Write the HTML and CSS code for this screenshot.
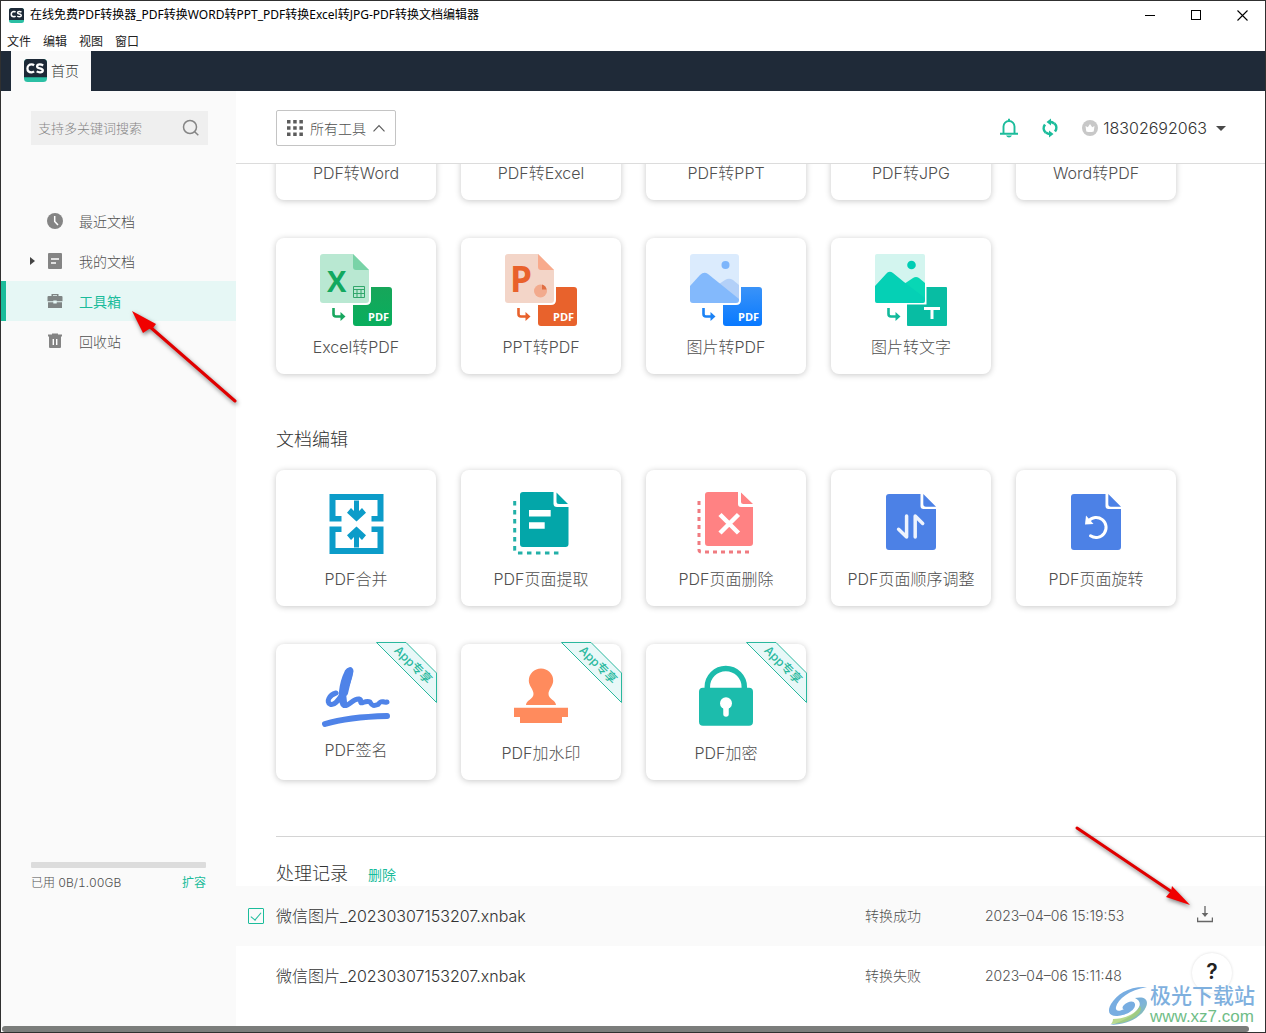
FILE: index.html
```html
<!DOCTYPE html>
<html lang="zh-CN">
<head>
<meta charset="utf-8">
<meta name="viewport" content="width=device-width, initial-scale=1">
<title>在线免费PDF转换器</title>
<link rel="stylesheet" href="styles.css">
</head>
<body>
<div class="window">
  <header class="titlebar">
    <svg class="logo logo-small" viewBox="0 0 24 24" aria-hidden="true"><rect width="24" height="24" rx="4" fill="#2bbfa4"/><path d="M4 0h16a4 4 0 0 1 4 4v15H0V4a4 4 0 0 1 4-4z" fill="#1d2937"/><path d="M10.500 6.600Q9.500 5.700 8 5.700C5.300 5.700 3.600 7.400 3.600 9.800s1.700 4.100 4.400 4.100q1.500 0 2.500-.9M20 6.700q-1.500-1-3.600-1-2.700 0-2.700 2 0 1.500 2.900 2 3 .5 3 2.200 0 2-2.900 2-2 0-3.500-1" fill="none" stroke="#fff" stroke-width="2.400"/></svg>
    <h1 class="window-title">在线免费PDF转换器_PDF转换WORD转PPT_PDF转换Excel转JPG-PDF转换文档编辑器</h1>
    <div class="window-controls">
      <button class="win-button" aria-label="最小化"><svg width="11" height="11" viewBox="0 0 11 11"><path d="M0 5.500h10" stroke="#000" fill="none"/></svg></button>
      <button class="win-button" aria-label="最大化"><svg width="11" height="11" viewBox="0 0 11 11"><rect x=".5" y=".5" width="9" height="9" stroke="#000" fill="none"/></svg></button>
      <button class="win-button" aria-label="关闭"><svg width="11" height="11" viewBox="0 0 11 11"><path d="M.5.500l10 10M10.500.500l-10 10" stroke="#000" stroke-width="1.100" fill="none"/></svg></button>
    </div>
  </header>
  <nav class="menubar">
    <a href="#">文件</a><a href="#">编辑</a><a href="#">视图</a><a href="#">窗口</a>
  </nav>
  <div class="tabbar">
    <a class="tab" href="#">
      <svg class="logo" viewBox="0 0 24 24" aria-hidden="true"><rect width="24" height="24" rx="4" fill="#2bbfa4"/><path d="M4 0h16a4 4 0 0 1 4 4v15H0V4a4 4 0 0 1 4-4z" fill="#1d2937"/><path d="M10.500 6.600Q9.500 5.700 8 5.700C5.300 5.700 3.600 7.400 3.600 9.800s1.700 4.100 4.400 4.100q1.500 0 2.500-.9M20 6.700q-1.500-1-3.600-1-2.700 0-2.700 2 0 1.500 2.900 2 3 .5 3 2.200 0 2-2.900 2-2 0-3.500-1" fill="none" stroke="#fff" stroke-width="2.400"/></svg>
      首页</a>
  </div>

  <div class="body">
    <aside class="sidebar">
      <form class="search">
        <input type="text" placeholder="支持多关键词搜索" aria-label="支持多关键词搜索">
        <svg width="18" height="18" viewBox="0 0 18 18" aria-hidden="true"><circle cx="8" cy="8" r="6.500" fill="none" stroke="#858585" stroke-width="1.500"/><path d="M12.700 12.700l3.600 3.600" stroke="#858585" stroke-width="1.500"/></svg>
      </form>
      <nav class="side-nav">
        <a class="side-link" href="#"><span class="caret-slot"></span>
          <svg width="16" height="16" viewBox="0 0 16 16"><circle cx="8" cy="8" r="8" fill="#848484"/><path d="M7.700 3v5.500l3.300 3.600" fill="none" stroke="#fff" stroke-width="1.500"/></svg>
          最近文档</a>
        <a class="side-link" href="#"><span class="caret-slot"><svg width="5" height="8" viewBox="0 0 5 8"><path d="M0 0l5 4-5 4z" fill="#444"/></svg></span>
          <svg width="16" height="16" viewBox="0 0 16 16"><rect x="1" width="14" height="16" rx="1" fill="#848484"/><path d="M4 6h8M4 10h5" stroke="#fff" stroke-width="1.600"/></svg>
          我的文档</a>
        <a class="side-link active" href="#"><span class="caret-slot"></span>
          <svg width="16" height="16" viewBox="0 0 16 16"><path fill-rule="evenodd" d="M4.500 3V1h7v2H14.500q1 0 1 1v4.300H9.700V7.500H6.300v.8H.5V4q0-1 1-1zM6 3h4v-.8H6zM1 9.200h5.300v1.300h3.400V9.200H15V15H1z" fill="#7f8584"/></svg>
          工具箱</a>
        <a class="side-link" href="#"><span class="caret-slot"></span>
          <svg width="16" height="16" viewBox="0 0 16 16"><path d="M1 1.500h4V.5h6v1h4v2H1zM2 3.500h12V14q0 1-1 1H3q-1 0-1-1z" fill="#848484"/><path d="M6.300 6v6M9.700 6v6" stroke="#fff" stroke-width="1.400"/></svg>
          回收站</a>
      </nav>
      <div class="storage">
        <div class="storage-bar"></div>
        <div class="storage-info"><span>已用 0B/1.00GB</span><a href="#">扩容</a></div>
      </div>
    </aside>

    <main class="main">
      <div class="toolbar">
        <button class="filter">
          <svg width="16" height="16" viewBox="0 0 16 16"><g fill="#5c5c5c"><path d="M0 0h3.500v3.500H0zM6.200 0h3.500v3.500H6.200zM12.400 0h3.500v3.500h-3.500zM0 6.200h3.500v3.500H0zM6.200 6.200h3.500v3.500H6.200zM12.400 6.200h3.500v3.500h-3.500zM0 12.400h3.500v3.500H0zM6.200 12.400h3.500v3.500H6.200zM12.400 12.400h3.500v3.500h-3.500z"/></g></svg>
          <span>所有工具</span>
          <svg width="12" height="8" viewBox="0 0 12 8"><path d="M.5 7.300L6 1.500l5.500 5.800" fill="none" stroke="#5c5c5c" stroke-width="1.200"/></svg>
        </button>
        <div class="account">
          <button class="icon-button" aria-label="通知"><svg width="18" height="20" viewBox="0 0 18 20"><path d="M3.500 15.500V8.500a5.500 5.500 0 0 1 11 0v7M0 15.700h18M9 3V.8" fill="none" stroke="#1bbc9b" stroke-width="1.900"/><path d="M6 17.500h6q-1 2-3 2t-3-2z" fill="#1bbc9b"/></svg></button>
          <button class="icon-button" aria-label="同步"><svg width="16" height="20" viewBox="0 0 16 20"><path d="M3.600 14.600A6 6 0 0 1 3 6.500M12.400 5.400A6 6 0 0 1 13 13.500M7.500 3.900q2.800 0 4.600 1.500M8.500 16.100q-2.800 0-4.600-1.500" fill="none" stroke="#1bbc9b" stroke-width="2.600"/><path d="M9 .500v7L4.500 4zM7 19.500v-7l4.500 3.500z" fill="#1bbc9b"/></svg></button>
          <button class="user">
            <svg width="16" height="16" viewBox="0 0 16 16"><circle cx="8" cy="8" r="8" fill="#c8c8c8"/><path d="M3.500 6l2.300 1.200L8 4l2.200 3.200L12.500 6l-.8 5.500q-3.700 1-7.400 0z" fill="#fff"/></svg>
            <span>18302692063</span>
            <svg width="10" height="5" viewBox="0 0 10 5"><path d="M0 0h10L5 5z" fill="#4a4a4a"/></svg>
          </button>
        </div>
      </div>

      <div class="content">
        <section class="convert">
          <div class="tools">
            <a class="tool" href="#"><span class="tool-icon"></span>PDF转Word</a>
            <a class="tool" href="#"><span class="tool-icon"></span>PDF转Excel</a>
            <a class="tool" href="#"><span class="tool-icon"></span>PDF转PPT</a>
            <a class="tool" href="#"><span class="tool-icon"></span>PDF转JPG</a>
            <a class="tool" href="#"><span class="tool-icon"></span>Word转PDF</a>

            <a class="tool" href="#">
              <svg class="tool-icon" viewBox="0 0 72 72"><defs><linearGradient id="green" x2="0" y2="1"><stop stop-color="#17a65a"/><stop offset="1" stop-color="#08ae5d"/></linearGradient></defs><path d="M51 33h18q3 0 3 3v33q0 3-3 3H36q-3 0-3-3V51h13q5 0 5-5z" fill="url(#green)"/><path d="M3 0h30l16 16v30q0 3-3 3H3q-3 0-3-3V3q0-3 3-3z" fill="#b9e8d2"/><path d="M33 0l16 16H36q-3 0-3-3z" fill="#79d3a7"/><text x="7" y="38" class="glyph-x" fill="#12a85f">X</text><path d="M33.500 32.500h11v11h-11zM33.500 35.500h11M33.500 39.500h11M37 35.500v8M41 35.500v8" fill="none" stroke="#31a66b" stroke-width="1"/><path d="M13.500 54v6q0 2.500 2.500 2.500h6" fill="none" stroke="#18a75f" stroke-width="2.600"/><path d="M20.500 58l5 4.500-5 4.500z" fill="#18a75f"/><text x="48" y="67" class="glyph-pdf">PDF</text></svg>
              Excel转PDF</a>
            <a class="tool" href="#">
              <svg class="tool-icon" viewBox="0 0 72 72"><path d="M51 33h18q3 0 3 3v33q0 3-3 3H36q-3 0-3-3V51h13q5 0 5-5z" fill="#e8622c"/><path d="M3 0h30l16 16v30q0 3-3 3H3q-3 0-3-3V3q0-3 3-3z" fill="#f3d5c8"/><path d="M33 0l16 16H36q-3 0-3-3z" fill="#f8aa8c"/><text x="5" y="38" class="glyph-p" fill="#e9612b">P</text><circle cx="35.500" cy="37" r="6.500" fill="#f2aa8d"/><path d="M37 35.500v-5a6 6 0 0 1 4.500 5z" fill="#e06e43"/><path d="M13.500 54v6q0 2.500 2.500 2.500h6" fill="none" stroke="#e8622c" stroke-width="2.600"/><path d="M20.500 58l5 4.500-5 4.500z" fill="#e8622c"/><text x="48" y="67" class="glyph-pdf">PDF</text></svg>
              PPT转PDF</a>
            <a class="tool" href="#">
              <svg class="tool-icon" viewBox="0 0 72 72"><defs><linearGradient id="blue" x2="0" y2="1"><stop stop-color="#3a93f8"/><stop offset="1" stop-color="#0879ff"/></linearGradient></defs><path d="M51 33h18q3 0 3 3v33q0 3-3 3H36q-3 0-3-3V51h13q5 0 5-5z" fill="url(#blue)"/><rect width="49" height="49" rx="3" fill="#dbebfd"/><path d="M29 30l6-4q4-2.500 8 0l6 5v15L29 30z" fill="#b3d0f8"/><path d="M0 32l10-11q4-4 8-1l31 25v1q0 3-3 3H3q-3 0-3-3z" fill="#83b9fc"/><circle cx="35.500" cy="11" r="4" fill="#7db5fb"/><path d="M13.500 54v6q0 2.500 2.500 2.500h6" fill="none" stroke="#1b82f5" stroke-width="2.600"/><path d="M20.500 58l5 4.500-5 4.500z" fill="#1b82f5"/><text x="48" y="67" class="glyph-pdf">PDF</text></svg>
              图片转PDF</a>
            <a class="tool" href="#">
              <svg class="tool-icon" viewBox="0 0 72 72"><path d="M51.500 33H71q1 0 1 1v37q0 1-1 1H33q-1 0-1-1V50.500h19.500z" fill="#08bda3"/><rect width="50" height="49" rx="2" fill="#d3f5ef"/><path d="M26 32l12-8q3-2 6 0l6 5v18z" fill="#08d7b5"/><path d="M0 32l11-12q3-4 7-1l11 9 21 16v3q0 2-2 2H2q-2 0-2-2z" fill="#05d0b5"/><circle cx="36.500" cy="11" r="4.300" fill="#00cdb4"/><path d="M13.500 54v6q0 2.500 2.500 2.500h6" fill="none" stroke="#12b99b" stroke-width="2.600"/><path d="M20.500 58l5 4.500-5 4.500z" fill="#12b99b"/><path d="M49 54.500h16M57 54.500V65" stroke="#fff" stroke-width="3" fill="none"/></svg>
              图片转文字</a>
          </div>
        </section>

        <section class="edit">
          <h2>文档编辑</h2>
          <div class="tools">
            <a class="tool" href="#">
              <svg class="tool-icon" viewBox="0 0 72 72"><g fill="#0c9cc9"><path d="M9.500 8h54v27.500h-12V30h6V14h-42v16h6v5.500h-12zM27 26.700l4-4.700 3 3V14.500h5V25l3-3 4 4.700-9.500 8.800z"/><path transform="matrix(1 0 0 -1 0 76)" d="M9.500 8h54v27.500h-12V30h6V14h-42v16h6v5.500h-12zM27 26.700l4-4.700 3 3V14.500h5V25l3-3 4 4.700-9.500 8.800z"/></g></svg>
              PDF合并</a>
            <a class="tool" href="#">
              <svg class="tool-icon" viewBox="0 0 72 72"><path d="M18 6h30.500v11.500q0 3.500 3.500 3.500h11.500v37q0 3-3 3H18q-3 0-3-3V9q0-3 3-3zM51.500 6.500L63 18H54q-2.500 0-2.500-2.500z" fill="#03a6a9"/><path d="M24 27.300h21.700M24 39.500h15.700" stroke="#fff" stroke-width="6.500"/><path d="M9.700 15v49q0 3 3 3H57" fill="none" stroke="#22b0a8" stroke-width="3" stroke-dasharray="4.500 4.500"/></svg>
              PDF页面提取</a>
            <a class="tool" href="#">
              <svg class="tool-icon" viewBox="0 0 72 72"><path d="M18 6h30v12q0 3 3 3h12v36q0 3-3 3H18q-3 0-3-3V9q0-3 3-3zM51 6.500L63 18h-9.500q-2.500 0-2.500-2.500z" fill="#ff8283"/><path d="M30 28.500l18.500 18.500M48.500 28.500L30 47" stroke="#fff" stroke-width="4.500"/><path d="M9 15v49q0 2 3 2h47.500" fill="none" stroke="#f07b80" stroke-width="3" stroke-dasharray="4 4"/></svg>
              PDF页面删除</a>
            <a class="tool" href="#">
              <svg class="tool-icon" viewBox="0 0 72 72"><path d="M14 8h31.500v12q0 3 3 3H61v38q0 3-3 3H14q-3 0-3-3V11q0-3 3-3zM48.300 8L61 20.700H51q-2.700 0-2.700-2.700z" fill="#4c81e6"/><path d="M31.600 30v21l-8-7.700M40.200 51V30l7.500 7.500" fill="none" stroke="#eef3fd" stroke-width="3.500" stroke-linecap="round" stroke-linejoin="round"/></svg>
              PDF页面顺序调整</a>
            <a class="tool" href="#">
              <svg class="tool-icon" viewBox="0 0 72 72"><path d="M14 8h31.500v12q0 3 3 3H61v38q0 3-3 3H14q-3 0-3-3V11q0-3 3-3zM48.300 8L61 20.700H51q-2.700 0-2.700-2.700z" fill="#4c81e6"/><path d="M28.500 35a10 10 0 1 1 2 14.800" fill="none" stroke="#fff" stroke-width="3" stroke-linecap="round"/><path d="M26 29.500l-1 9 8.500-.5z" fill="#fff"/></svg>
              PDF页面旋转</a>

            <a class="tool" href="#">
              <svg class="tool-icon tool-icon-short" viewBox="0 0 72 69"><g fill="none" stroke="#4f83e8" stroke-width="5" stroke-linecap="round" stroke-linejoin="round"><path d="M16 33C9 35 6 42 10 44C17 48 29 24 31 11C31 9 29 9 27 12C21 24 19 43 24 45.500C29 47 33 38 39 39C43 40 38 44 43 42.500C47 41 48 41 50 42C52 46 54 46 58 44.500C62 39 62 43 67 42"/><path d="M29 12C24 22 22 34 24 42M30 12L25 33" stroke-width="6"/><path d="M5 64Q28 57 67 56" stroke-width="6"/></g></svg>
              PDF签名
              <svg class="ribbon" viewBox="0 0 61 61"><path d="M.5.500H30L60.500 31v29.500z" fill="#e8f8f8" stroke="#2ab89e"/><text x="37" y="27" transform="rotate(45 37 23)">App专享</text></svg></a>
            <a class="tool" href="#">
              <svg class="tool-icon" viewBox="0 0 72 72"><path d="M36 8.500a12.200 12.200 0 0 1 12.200 12.200c0 5-4.700 8.500-4.700 13.300 0 5 7.500 6.500 7.500 11H21c0-4.500 7.500-6 7.500-11 0-4.800-4.700-8.300-4.700-13.300A12.200 12.200 0 0 1 36 8.500zM9 47.700h54V57h-6v6H15v-6H9z" fill="#ff8b5d"/></svg>
              PDF加水印
              <svg class="ribbon" viewBox="0 0 61 61"><path d="M.5.500H30L60.500 31v29.500z" fill="#e8f8f8" stroke="#2ab89e"/><text x="37" y="27" transform="rotate(45 37 23)">App专享</text></svg></a>
            <a class="tool" href="#">
              <svg class="tool-icon" viewBox="0 0 72 72"><path d="M17.300 29v-2a18.500 18.500 0 0 1 37 0v2" fill="none" stroke="#1cbcac" stroke-width="5.500"/><rect x="9" y="27.700" width="54" height="38" rx="4" fill="#1cbcac"/><circle cx="36" cy="43.300" r="6" fill="#fff"/><path d="M36 45v9" stroke="#fff" stroke-width="5.500" stroke-linecap="round"/></svg>
              PDF加密
              <svg class="ribbon" viewBox="0 0 61 61"><path d="M.5.500H30L60.500 31v29.500z" fill="#e8f8f8" stroke="#2ab89e"/><text x="37" y="27" transform="rotate(45 37 23)">App专享</text></svg></a>
          </div>
        </section>

        <section class="records">
          <div class="records-head"><h2>处理记录</h2><a href="#">删除</a></div>
          <table>
            <tbody>
              <tr class="selected">
                <td class="col-check"><input type="checkbox" id="rec1" aria-label="选择记录" checked></td>
                <td class="col-name"><label for="rec1">微信图片_20230307153207.xnbak</label></td>
                <td class="col-status">转换成功</td>
                <td class="col-date">2023–04–06 15:19:53</td>
                <td class="col-action"><button class="icon-button" aria-label="下载"><svg width="16" height="17" viewBox="0 0 16 17"><path d="M8 0v9M.6 11.500v4h14.800v-4" fill="none" stroke="#666" stroke-width="1.300"/><path d="M4.700 7h6.600L8 11z" fill="#666"/></svg></button></td>
              </tr>
              <tr>
                <td class="col-check"></td>
                <td class="col-name">微信图片_20230307153207.xnbak</td>
                <td class="col-status">转换失败</td>
                <td class="col-date">2023–04–06 15:11:48</td>
                <td class="col-action"></td>
              </tr>
            </tbody>
          </table>
        </section>
      </div>
    </main>
  </div>
  <div class="scroll-thumb"></div>

  <button class="help" aria-label="帮助">?</button>

  <div class="watermark">
    <svg width="42" height="40" viewBox="0 0 42 40" aria-hidden="true"><defs><linearGradient id="swirl" x2="1" y2="1"><stop stop-color="#5f9fdc"/><stop offset=".55" stop-color="#7fb4d8"/><stop offset="1" stop-color="#8cc98c"/></linearGradient></defs><path d="M40 1C22 0 10 8 4 18c-4 7-2 12 5 12 8 0 20-5 19-12-1-4-7-3-11 1-2 2-2 4 0 4-5 3-9 2-8-2C11 13 22 4 40 1z" fill="#609fdc" opacity=".85"/><path d="M28 12c10-2 14 2 11 9C35 31 20 39 3 39c14-4 26-11 29-18 2-4 0-7-4-9z" fill="url(#swirl)"/><path d="M6 33c12 0 24-6 27-13 5 7-11 18-29 18 1-1 2-3 2-5z" fill="#a5cf72" opacity=".8"/></svg>
    <div class="watermark-text"><strong>极光下载站</strong><span>www.xz7.com</span></div>
  </div>

  <svg class="pointer pointer-left" width="112" height="100" viewBox="0 0 112 100" aria-hidden="true"><path d="M20 19l86 75" stroke="#e00000" stroke-width="3" stroke-linecap="round"/><path d="M3 4l24 13-3 4-4 1-6 4z" fill="#f00000"/></svg>
  <svg class="pointer pointer-right" width="122" height="86" viewBox="0 0 122 86" aria-hidden="true"><path d="M3 3l95 64" stroke="#e00000" stroke-width="3" stroke-linecap="round"/><path d="M116 80L98 61l-1 5-5 6z" fill="#f00000"/></svg>
</div>
</body>
</html>
```

FILE: styles.css
```css
* { box-sizing: border-box; }

body {
  margin: 0;
  font-family: Inter, "Noto Sans CJK SC", sans-serif;
  font-size: 14px;
  font-weight: 300;
  color: #505050;
  background: #fff;
}

a { color: inherit; text-decoration: none; }
button { padding: 0; border: 0; background: none; font: inherit; color: inherit; cursor: pointer; }
svg { flex: none; }
h1, h2 { margin: 0; font-weight: 300; }

.window {
  position: relative;
  display: flex;
  flex-direction: column;
  min-height: 100vh;
  border: 1px solid #303030;
  overflow: hidden;
}

/* Window chrome */
.titlebar {
  display: flex;
  align-items: center;
  gap: 6px;
  height: 28px;
  padding-left: 8px;
}
.logo { width: 23px; height: 23px; }
.logo-small { width: 15px; height: 15px; }
.window-title {
  flex: 1;
  font: 400 12px/16px "Noto Sans", "Noto Sans CJK SC", sans-serif;
  color: #000;
  white-space: nowrap;
}
.window-controls { display: flex; align-self: stretch; }
.win-button { display: grid; place-items: center; width: 46px; }

.menubar {
  display: flex;
  gap: 12px;
  height: 22px;
  padding: 0 6px;
  font: 400 12px/24px "Noto Sans CJK SC", sans-serif;
  color: #222;
}

.tabbar { display: flex; height: 40px; padding-left: 10px; background: #1f2a38; }
.tab {
  display: flex;
  align-items: center;
  gap: 4px;
  width: 80px;
  padding: 0 0 2px 13px;
  background: #fafafa;
  color: #333;
}

.body { display: flex; flex: 1; }

/* Sidebar */
.sidebar {
  display: flex;
  flex-direction: column;
  flex: none;
  width: 235px;
  padding: 20px 0 134px;
  background: #fafafa;
}
.search {
  display: flex;
  align-items: center;
  height: 34px;
  margin: 0 28px 0 30px;
  padding: 0 8px 0 7px;
  background: #efefef;
}
.search input {
  flex: 1;
  min-width: 0;
  padding: 0;
  border: 0;
  outline: 0;
  background: none;
  font: inherit;
  font-size: 13px;
}
.search input::placeholder { color: #858585; }
.side-nav { margin-top: 56px; }
.side-link {
  display: flex;
  align-items: center;
  height: 40px;
  padding: 0 0 1px 29px;
}
.side-link > svg { margin-right: 16px; }
.caret-slot { display: flex; width: 17px; }
.side-link.active {
  padding-left: 24px;
  border-left: 5px solid #1bbc9b;
  background: #e6f7f5;
  color: #1bbc9b;
  font-weight: 400;
}
.storage { margin: auto 30px 0; font-size: 12px; font-variant-numeric: tabular-nums; }
.storage-bar { height: 6px; border-radius: 1px; background: #dcdcdc; }
.storage-info { display: flex; justify-content: space-between; margin-top: 6px; line-height: 18px; }
.storage-info a, .records-head a { color: #1bbc9b; font-weight: 400; }

/* Main column */
.main { flex: 1; min-width: 0; }
.toolbar {
  display: flex;
  align-items: center;
  justify-content: space-between;
  height: 73px;
  padding: 2px 39px 0 40px;
  border-bottom: 1px solid #dcdcdc;
}
.filter {
  display: flex;
  align-items: center;
  gap: 7px;
  height: 36px;
  padding: 0 10px;
  border: 1px solid #c4c4c4;
  border-radius: 2px;
}
.account { display: flex; align-items: center; gap: 24px; }
.icon-button { display: inline-flex; align-items: center; }
.user { display: flex; align-items: center; gap: 5px; font-size: 16px; color: #333; }
.user svg:last-child { margin-left: 4px; }

.content { overflow: hidden; }
.tools {
  display: grid;
  grid-template-columns: repeat(auto-fill, 160px);
  gap: 38px 25px;
}
.convert, .edit { padding: 0 40px; }
/* The list is scrolled down so the first row sits partly under the toolbar. */
.convert { margin-top: -100px; }
.tool {
  position: relative;
  display: flex;
  flex-direction: column;
  align-items: center;
  gap: 9px;
  height: 136px;
  padding-top: 16px;
  border-radius: 8px;
  background: #fff;
  box-shadow: 0 1px 6px rgba(0, 0, 0, .22);
  font-size: 16px;
  line-height: 24px;
  white-space: nowrap;
}
.tool-icon { flex: none; width: 72px; height: 72px; }
.tool-icon-short { height: 69px; }
.tool-icon text { font-family: "Open Sans", sans-serif; font-weight: 700; }
.glyph-x { font-size: 29px; }
.glyph-p { font-size: 35px; }
.glyph-pdf { font-size: 11px; fill: #fff; }
.ribbon { position: absolute; top: -2px; right: -1px; width: 61px; height: 61px; }
.ribbon text { font-size: 12px; font-weight: 500; fill: #2ab89e; text-anchor: middle; }

h2 { font-size: 18px; line-height: 28px; color: #333; }
.edit { margin-top: 52px; }
.edit h2 { margin-bottom: 16px; }

/* Conversion records */
.records { margin-top: 56px; }
.records-head {
  display: flex;
  align-items: baseline;
  gap: 20px;
  height: 50px;
  margin-left: 40px;
  padding-top: 23px;
  border-top: 1px solid #d4d4d4;
}
table { width: 100%; border-collapse: collapse; table-layout: fixed; }
td { height: 60px; padding: 0 0 2px; white-space: nowrap; }
.selected { background: #fafafa; }
.col-check { width: 40px; padding: 0 0 0 12px; vertical-align: middle; }
.col-check input {
  display: grid;
  place-items: center;
  appearance: none;
  width: 16px;
  height: 16px;
  margin: 0;
  border: 1px solid #1bbc9b;
  border-radius: 1px;
}
.col-check input:checked::after {
  content: "";
  width: 5px;
  height: 9px;
  margin-bottom: 3px;
  border: solid #1bbc9b;
  border-width: 0 1px 1px 0;
  transform: rotate(40deg);
}
.col-name { font-size: 16px; color: #333; }
.col-status { width: 120px; }
.col-date { width: 212px; }
.col-action { width: 68px; padding: 0; vertical-align: middle; }

.scroll-thumb { height: 6px; margin: 0 16px 0 1px; border-radius: 3px; background: #7b7d7b; }

/* Floating items */
.help {
  position: absolute;
  right: 33px;
  bottom: 39px;
  width: 40px;
  height: 40px;
  padding-bottom: 2px;
  border-radius: 50%;
  background: #fff;
  box-shadow: 0 0 3px rgba(0, 0, 0, .14);
  font-size: 21px;
  line-height: 20px;
  font-weight: 600;
  color: #222;
}
.watermark { position: absolute; right: 10px; bottom: 5px; display: flex; align-items: center; gap: 1px; }
.watermark-text { display: flex; flex-direction: column; }
.watermark strong { font-size: 21px; line-height: 22px; font-weight: 500; color: #7fb0de; }
.watermark span { font: 400 17px/20px "Liberation Sans", sans-serif; color: #70bd87; }
.pointer { position: absolute; pointer-events: none; filter: drop-shadow(1px 2px 2px rgba(0, 0, 0, .5)); }
.pointer-left { left: 128px; top: 306px; }
.pointer-right { right: 69px; top: 824px; }
```
